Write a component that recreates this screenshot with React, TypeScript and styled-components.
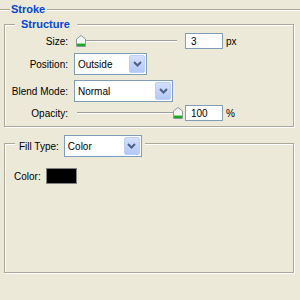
import React from 'react';
import styled, { createGlobalStyle } from 'styled-components';

const GlobalStyle = createGlobalStyle`
  body {
    margin: 0;
    padding: 0;
    background: #ece9d8;
  }
`;

const Page = styled.div`
  width: 300px;
  height: 300px;
  overflow: hidden;
  box-sizing: border-box;
  padding-top: 3px;
  background: #ece9d8;
  font-family: "Liberation Sans", Arial, sans-serif;
  font-size: 10px;
  color: #000;
`;

// etched section header (Stroke)
const Header = styled.div`
  display: flex;
  height: 13px;
`;

const EtchLine = styled.div<{ $w?: number }>`
  flex: ${(p) => (p.$w ? `0 0 ${p.$w}px` : '1')};
  height: 0;
  margin-top: 6px;
  border-top: 1px solid #aca899;
  border-bottom: 1px solid #fff;
`;

const Title = styled.span`
  font-size: 11px;
  font-weight: bold;
  line-height: 13px;
  color: #0046d5;
  padding: 0 2px 0 1px;
  white-space: nowrap;
`;

const Group = styled.div<{ $mt: number; $h?: number; $pb?: number }>`
  margin: ${(p) => p.$mt}px 0 0 4px;
  width: 290px;
  ${(p) => (p.$h ? `height: ${p.$h}px;` : '')}
  padding-bottom: ${(p) => p.$pb ?? 0}px;
  box-sizing: border-box;
  border: 1px solid #aca899;
  box-shadow: inset 1px 1px 0 #fff, 1px 1px 0 #fff;
  display: flex;
  flex-direction: column;
  align-items: flex-start;
`;

const Legend = styled.div<{ $mt: number }>`
  display: flex;
  align-items: center;
  gap: 5px;
  margin: ${(p) => p.$mt}px 0 0 10px;
  padding: 0 3px 0 4px;
  background: #ece9d8;
  line-height: 13px;
`;

const GroupTitle = styled(Title)`
  padding: 0 4px 0 2px;
`;

const Row = styled.div<{ $mt: number; $h: number }>`
  display: flex;
  align-items: center;
  height: ${(p) => p.$h}px;
  margin-top: ${(p) => p.$mt}px;
`;

const Label = styled.span`
  width: 63px;
  margin-right: 6px;
  text-align: right;
  white-space: nowrap;
`;

const Slider = styled.div`
  position: relative;
  width: 108px;
  height: 16px;
  margin-right: 3px;
`;

const Track = styled.div`
  margin: 7px 0 0 3px;
  width: 100px;
  height: 0;
  border-top: 1px solid #9d9c99;
  border-bottom: 1px solid #fff;
`;

const Thumb = styled.svg`
  position: absolute;
  top: 2px;
  width: 10px;
  height: 12px;
`;

const NumInput = styled.input`
  width: 38px;
  height: 16px;
  box-sizing: border-box;
  margin: 0 3px 0 0;
  padding: 0 0 0 5px;
  border: 1px solid #7f9db9;
  background: #fff;
  font-family: inherit;
  font-size: 10px;
  color: #000;
  outline: none;
`;

const Unit = styled.span`
  white-space: nowrap;
`;

const Combo = styled.div<{ $w: number }>`
  display: flex;
  width: ${(p) => p.$w}px;
  height: 22px;
  box-sizing: border-box;
  padding: 1px;
  border: 1px solid #7f9db9;
  background: #fff;
`;

const ComboValue = styled.span`
  flex: 1;
  padding-left: 2px;
  line-height: 20px;
  white-space: nowrap;
`;

const ComboButton = styled.div`
  width: 16px;
  box-sizing: border-box;
  border: 1px solid #bccff9;
  border-radius: 2px;
  background: linear-gradient(#d4e1fd, #b3c8f6);
  display: flex;
  align-items: center;
  justify-content: center;
`;

const Swatch = styled.div`
  width: 31px;
  height: 16px;
  box-sizing: border-box;
  border: 1px solid #808080;
  background: #000;
`;

const ColorLabel = styled.span`
  margin: 0 5px 0 9px;
`;

const Chevron = () => (
  <svg width="9" height="6" viewBox="0 0 9 6">
    <polyline points="1,1 4.5,4.5 8,1" fill="none" stroke="#4d6185" strokeWidth="2" />
  </svg>
);

const Select = ({ value, width }: { value: string; width: number }) => (
  <Combo $w={width}>
    <ComboValue>{value}</ComboValue>
    <ComboButton>
      <Chevron />
    </ComboButton>
  </Combo>
);

const TrackSlider = ({ frac }: { frac: number }) => (
  <Slider>
    <Track />
    <Thumb viewBox="0 0 10 12" style={{ left: Math.round(1 + frac * 98) }}>
      <path d="M0.5 4 L5 0.5 L9.5 4 L9.5 11.5 L0.5 11.5 Z" fill="#f6f6f2" stroke="#8c9aa6" />
      <rect x="1" y="8" width="8" height="1" fill="#8fdc8f" />
      <rect x="1" y="9" width="8" height="2" fill="#21a621" />
    </Thumb>
  </Slider>
);

const App = () => {
  return (
    <>
      <GlobalStyle />
      <Page>
        <Header>
          <EtchLine $w={10} />
          <Title>Stroke</Title>
          <EtchLine />
        </Header>

        <Group $mt={8} $pb={5}>
          <Legend $mt={-7}>
            <GroupTitle>Structure</GroupTitle>
          </Legend>
          <Row $mt={2} $h={16}>
            <Label>Size:</Label>
            <TrackSlider frac={0.01} />
            <NumInput value="3" readOnly />
            <Unit>px</Unit>
          </Row>
          <Row $mt={4} $h={22}>
            <Label>Position:</Label>
            <Select value="Outside" width={73} />
          </Row>
          <Row $mt={5} $h={22}>
            <Label>Blend Mode:</Label>
            <Select value="Normal" width={99} />
          </Row>
          <Row $mt={3} $h={16}>
            <Label>Opacity:</Label>
            <TrackSlider frac={1} />
            <NumInput value="100" readOnly />
            <Unit>%</Unit>
          </Row>
        </Group>

        <Group $mt={16} $h={130}>
          <Legend $mt={-9}>
            <span>Fill Type:</span>
            <Select value="Color" width={78} />
          </Legend>
          <Row $mt={11} $h={16}>
            <ColorLabel>Color:</ColorLabel>
            <Swatch />
          </Row>
        </Group>
      </Page>
    </>
  );
};

export default App;
